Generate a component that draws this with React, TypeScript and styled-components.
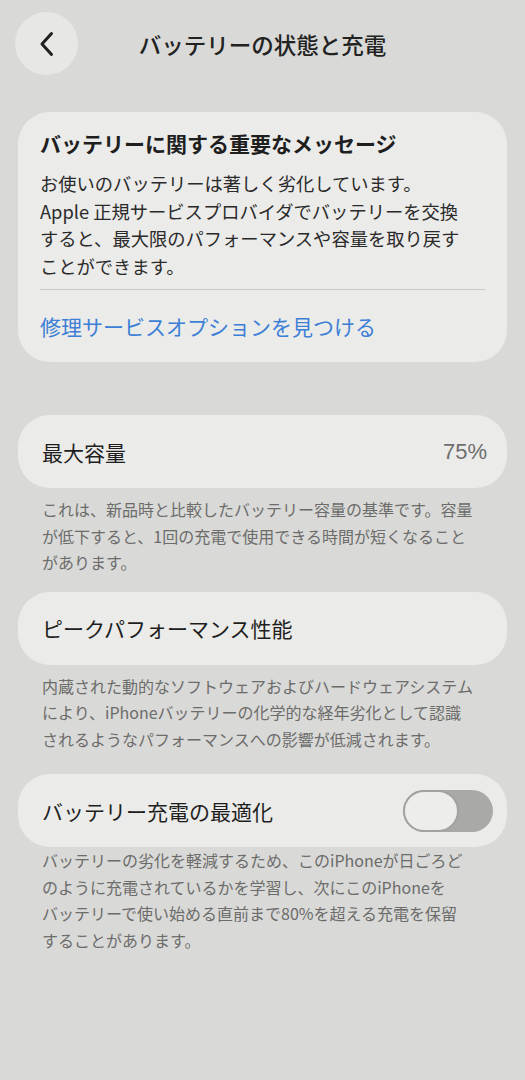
import styled, { createGlobalStyle } from 'styled-components';

const GlobalStyle = createGlobalStyle`
  html, body {
    margin: 0;
    padding: 0;
    background: #d9d9d7;
  }
  body {
    font-family: "Noto Sans CJK JP", "Noto Sans", sans-serif;
    color: #1c1c1c;
  }
`;

const Page = styled.div`
  width: 525px;
  min-height: 1080px;
  box-sizing: border-box;
  padding: 12px 18px 40px;
  background: #d9d9d7;
`;

const Header = styled.header`
  display: grid;
  grid-template-columns: 63px 1fr 63px;
  align-items: center;
  margin: 0 -3px 37px;
`;

const BackButton = styled.button`
  width: 63px;
  height: 63px;
  border: none;
  border-radius: 50%;
  background: #e7e7e5;
  display: flex;
  align-items: center;
  justify-content: center;
  padding: 0;
`;

const Title = styled.h1`
  margin: 0;
  text-align: center;
  font-size: 22.5px;
  font-weight: 500;
  color: #222;
`;

const Card = styled.div`
  background: #ebebe9;
  border-radius: 32px;
`;

const MessageCard = styled(Card)`
  padding: 16px 22px 0;
`;

const MessageTitle = styled.h2`
  margin: 0;
  font-size: 21px;
  line-height: 30px;
  font-weight: 700;
  color: #1e1e1e;
`;

const MessageBody = styled.p`
  margin: 12px 0 9px;
  font-size: 18.3px;
  line-height: 27.5px;
  color: #2a2a2a;
  white-space: nowrap;
`;

const Divider = styled.div`
  height: 1px;
  background: #c9c9c7;
`;

const LinkRow = styled.div`
  height: 72px;
  display: flex;
  align-items: center;
  font-size: 21px;
  color: #3d7fd6;
`;

const Section = styled.section<{ $gap: number }>`
  margin-top: ${(p) => p.$gap}px;
`;

const Row = styled(Card)`
  height: 73px;
  box-sizing: border-box;
  padding: 0 14px 0 24px;
  display: flex;
  align-items: center;
  justify-content: space-between;
`;

const RowLabel = styled.span`
  font-size: 21px;
  color: #1e1e1e;
`;

const RowValue = styled.span`
  font-size: 22px;
  margin-right: 6px;
  color: #6e6e6e;
  font-family: "Liberation Sans", "Noto Sans", sans-serif;
`;

const Footnote = styled.p<{ $top: number }>`
  margin: ${(p) => p.$top}px 0 0;
  padding: 0 24px;
  font-size: 16px;
  line-height: 26.5px;
  color: #6c6c6b;
  white-space: nowrap;
`;

const Track = styled.div<{ $on: boolean }>`
  width: 90px;
  height: 42px;
  border-radius: 21px;
  background: ${(p) => (p.$on ? '#34c759' : '#a9a9a7')};
  display: flex;
  justify-content: ${(p) => (p.$on ? 'flex-end' : 'flex-start')};
`;

const Knob = styled.div`
  width: 56px;
  height: 42px;
  box-sizing: border-box;
  border-radius: 21px;
  background: #ededeb;
  border: 2px solid #a2a2a0;
`;

const Toggle = ({ on }: { on: boolean }) => (
  <Track $on={on}>
    <Knob />
  </Track>
);

const App = () => {
  return (
    <>
      <GlobalStyle />
      <Page>
        <Header>
          <BackButton aria-label="戻る">
            <svg width="16" height="26" viewBox="0 0 16 26" fill="none">
              <path d="M12.5 2.5 L3 13 L12.5 23.5" stroke="#1f1f1f" strokeWidth="3" strokeLinecap="round" strokeLinejoin="round" />
            </svg>
          </BackButton>
          <Title>バッテリーの状態と充電</Title>
          <span />
        </Header>

        <MessageCard>
          <MessageTitle>バッテリーに関する重要なメッセージ</MessageTitle>
          <MessageBody>
            お使いのバッテリーは著しく劣化しています。
            <br />
            Apple 正規サービスプロバイダでバッテリーを交換
            <br />
            すると、最大限のパフォーマンスや容量を取り戻す
            <br />
            ことができます。
          </MessageBody>
          <Divider />
          <LinkRow>修理サービスオプションを見つける</LinkRow>
        </MessageCard>

        <Section $gap={53}>
          <Row>
            <RowLabel>最大容量</RowLabel>
            <RowValue>75%</RowValue>
          </Row>
          <Footnote $top={8}>
            これは、新品時と比較したバッテリー容量の基準です。容量
            <br />
            が低下すると、1回の充電で使用できる時間が短くなること
            <br />
            があります。
          </Footnote>
        </Section>

        <Section $gap={16}>
          <Row>
            <RowLabel>ピークパフォーマンス性能</RowLabel>
          </Row>
          <Footnote $top={8}>
            内蔵された動的なソフトウェアおよびハードウェアシステム
            <br />
            により、iPhoneバッテリーの化学的な経年劣化として認識
            <br />
            されるようなパフォーマンスへの影響が低減されます。
          </Footnote>
        </Section>

        <Section $gap={22}>
          <Row>
            <RowLabel>バッテリー充電の最適化</RowLabel>
            <Toggle on={false} />
          </Row>
          <Footnote $top={0}>
            バッテリーの劣化を軽減するため、このiPhoneが日ごろど
            <br />
            のように充電されているかを学習し、次にこのiPhoneを
            <br />
            バッテリーで使い始める直前まで80%を超える充電を保留
            <br />
            することがあります。
          </Footnote>
        </Section>
      </Page>
    </>
  );
};

export default App;
